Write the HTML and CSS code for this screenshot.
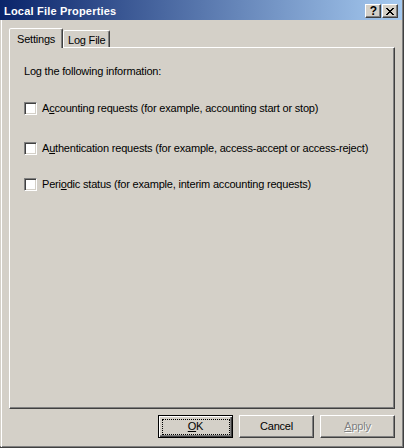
FILE: index.html
```html
<!DOCTYPE html>
<html lang="en">
<head>
<meta charset="utf-8">
<title>Local File Properties</title>
<link rel="stylesheet" href="styles.css">
</head>
<body>
<div class="window">
  <div class="titlebar">
    <span class="title">Local File Properties</span>
    <div class="caps">
      <span class="capbtn help">?</span>
      <span class="capbtn close"><svg width="8" height="7" viewBox="0 0 8 7" shape-rendering="crispEdges"><path fill="#000" d="M0 0h2v1H0zM6 0h2v1H6zM1 1h2v1H1zM5 1h2v1H5zM2 2h4v1H2zM3 3h2v1H3zM2 4h4v1H2zM1 5h2v1H1zM5 5h2v1H5zM0 6h2v1H0zM6 6h2v1H6z"/></svg></span>
    </div>
  </div>
  <div class="client">
    <div class="tabs">
      <div class="tab active">Settings</div>
      <div class="tab inactive">Log File</div>
    </div>
    <div class="panel">
      <p class="intro">Log the following information:</p>
      <label class="row r1"><span class="cb"></span><span>A<u>c</u>counting requests (for example, accounting start or stop)</span></label>
      <label class="row r2"><span class="cb"></span><span>A<u>u</u>thentication requests (for example, access-accept or access-reject)</span></label>
      <label class="row r3"><span class="cb"></span><span>Peri<u>o</u>dic status (for example, interim accounting requests)</span></label>
    </div>
    <div class="actions">
      <button class="btn default"><span class="focus"></span><span><u>O</u>K</span></button>
      <button class="btn">Cancel</button>
      <button class="btn disabled"><span><u>A</u>pply</span></button>
    </div>
  </div>
</div>
</body>
</html>
```
FILE: styles.css
```css
html, body {
  margin: 0;
  padding: 0;
}
body {
  width: 404px;
  height: 448px;
  overflow: hidden;
  background: #d4d0c8;
  font-family: "Liberation Sans", Arial, sans-serif;
  font-size: 11px;
  letter-spacing: -0.2px;
  color: #000;
}
.window {
  width: 404px;
  height: 448px;
  box-sizing: border-box;
  display: flex;
  flex-direction: column;
  background: #d4d0c8;
  border-right: 1px solid #404040;
  border-bottom: 1px solid #404040;
  box-shadow: inset -1px -1px #808080;
}
.titlebar {
  flex: none;
  width: 402px;
  height: 20px;
  display: flex;
  align-items: flex-start;
  background: linear-gradient(to right, #0a246a, #a6caf0);
}
.title {
  color: #fff;
  font-weight: bold;
  letter-spacing: 0.2px;
  line-height: 13px;
  padding: 5px 0 0 4px;
}
.caps {
  margin-left: auto;
  margin-top: 4px;
  padding-right: 4px;
  display: flex;
  gap: 1px;
}
.capbtn {
  width: 16px;
  height: 14px;
  box-sizing: border-box;
  background: #d4d0c8;
  border: 1px solid;
  border-color: #fff #404040 #404040 #fff;
  box-shadow: inset -1px -1px #808080;
  display: flex;
  align-items: center;
  justify-content: center;
}
.capbtn.help {
  font-weight: bold;
  font-size: 12px;
  line-height: 12px;
  letter-spacing: 0;
  padding-left: 1px;
}
.client {
  flex: 1;
  margin-left: 1px;
  border-left: 1px solid #fff;
  padding: 8px 8px 0 7px;
  display: flex;
  flex-direction: column;
}
.tabs {
  display: flex;
  align-items: flex-end;
  height: 19px;
  position: relative;
  z-index: 1;
}
.tab {
  box-sizing: border-box;
  background: #d4d0c8;
  border: 1px solid;
  border-bottom: none;
  border-color: #fff #404040 transparent #fff;
  box-shadow: inset -1px 0 #808080;
  border-radius: 2px 2px 0 0;
  line-height: 13px;
  white-space: nowrap;
}
.tab.active {
  width: 54px;
  height: 20px;
  padding: 4px 0 0 7px;
  margin-bottom: -1px;
}
.tab.inactive {
  width: 47px;
  height: 17px;
  padding: 3px 0 0 4px;
}
.panel {
  height: 362px;
  box-sizing: border-box;
  border: 1px solid;
  border-color: #fff #404040 #404040 #fff;
  box-shadow: inset -1px -1px #808080;
  padding: 17px 14px 0 14px;
  display: flex;
  flex-direction: column;
}
.intro {
  margin: 0;
  line-height: 13px;
}
.row {
  display: flex;
  align-items: center;
  height: 13px;
  line-height: 13px;
  white-space: nowrap;
}
.r1 { margin-top: 24px; }
.r2 { margin-top: 27px; }
.r3 { margin-top: 23px; }
.cb {
  flex: none;
  width: 13px;
  height: 13px;
  box-sizing: border-box;
  background: #fff;
  border: 1px solid;
  border-color: #808080 #fff #fff #808080;
  box-shadow: inset 1px 1px #404040, inset -1px -1px #d4d0c8;
  margin-right: 5px;
}
.actions {
  display: flex;
  justify-content: flex-end;
  gap: 6px;
  margin-top: 6px;
}
.btn {
  width: 75px;
  height: 23px;
  box-sizing: border-box;
  padding: 0;
  background: #d4d0c8;
  font: inherit;
  letter-spacing: inherit;
  line-height: 13px;
  color: #000;
  border: 1px solid;
  border-color: #fff #404040 #404040 #fff;
  box-shadow: inset -1px -1px #808080;
  position: relative;
  display: flex;
  align-items: center;
  justify-content: center;
}
.btn.default {
  border-color: #000;
  box-shadow: inset 1px 1px #fff, inset -1px -1px #404040, inset -2px -2px #808080;
}
.focus {
  position: absolute;
  left: 3px;
  top: 3px;
  right: 2px;
  bottom: 2px;
  border: 1px dotted #000;
}
.btn.disabled {
  color: #808080;
  text-shadow: 1px 1px #fff;
}
```
